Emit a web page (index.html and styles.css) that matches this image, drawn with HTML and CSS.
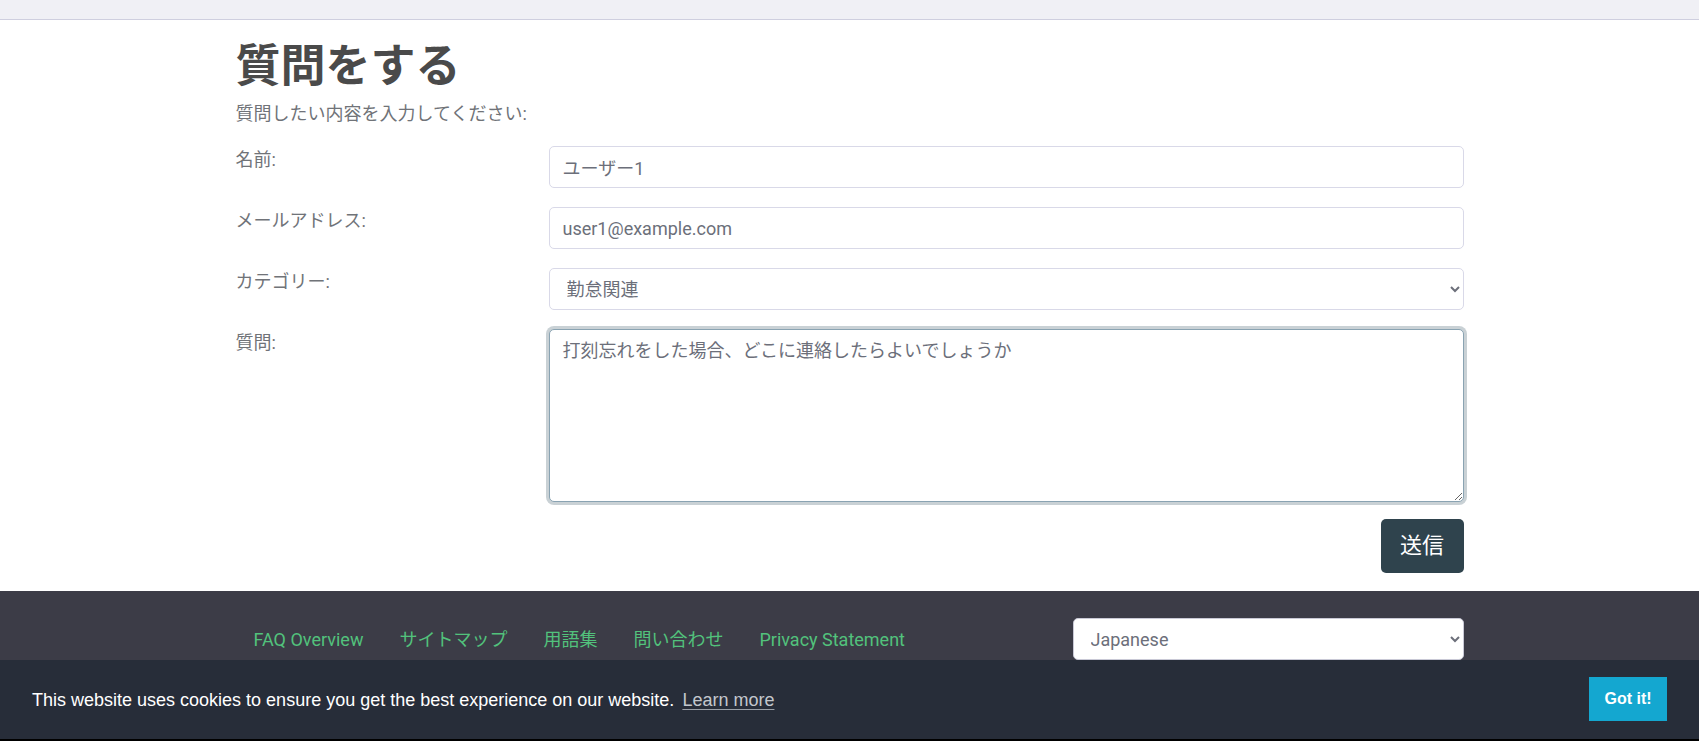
FILE: index.html
```html
<!DOCTYPE html>
<html lang="ja">
<head>
<meta charset="utf-8">
<title>質問をする</title>
<link rel="stylesheet" href="styles.css">
</head>
<body>
<div class="topbar"></div>
<main class="container">
  <h1 class="title">質問をする</h1>
  <p class="lead">質問したい内容を入力してください:</p>
  <form class="qform">
    <div class="row">
      <label class="label" for="name">名前:</label>
      <input class="field" id="name" type="text" value="ユーザー1">
    </div>
    <div class="row">
      <label class="label" for="mail">メールアドレス:</label>
      <input class="field" id="mail" type="text" value="user1@example.com">
    </div>
    <div class="row">
      <label class="label" for="cat">カテゴリー:</label>
      <select class="field select" id="cat">
        <option>勤怠関連</option>
      </select>
    </div>
    <div class="row">
      <label class="label" for="q">質問:</label>
      <textarea class="field area" id="q">打刻忘れをした場合、どこに連絡したらよいでしょうか</textarea>
    </div>
    <div class="actions">
      <button class="submit" type="button">送信</button>
    </div>
  </form>
</main>
<footer class="footer">
  <div class="container footer-row">
    <nav class="links">
      <a class="link" href="#">FAQ Overview</a>
      <a class="link" href="#">サイトマップ</a>
      <a class="link" href="#">用語集</a>
      <a class="link" href="#">問い合わせ</a>
      <a class="link" href="#">Privacy Statement</a>
    </nav>
    <select class="lang">
      <option>Japanese</option>
    </select>
  </div>
</footer>
<div class="cookie">
  <span class="cookie-msg">This website uses cookies to ensure you get the best experience on our website. <a class="learn" href="#">Learn more</a></span>
  <button class="gotit" type="button">Got it!</button>
</div>
</body>
</html>
```

FILE: styles.css
```css
* { box-sizing: border-box; }

html, body {
  margin: 0;
  padding: 0;
  background: #ffffff;
  font-family: Roboto, "Noto Sans CJK JP", sans-serif;
  font-size: 18px;
  line-height: 27px;
  color: #6c6f75;
  overflow: hidden;
}

.topbar {
  height: 20px;
  background: #f0f0f5;
  border-bottom: 1px solid #cfcfdf;
}

.container {
  width: 1228px;
  margin: 0 auto;
}

.title {
  margin: 20px 0 6px;
  font-size: 45px;
  line-height: 54px;
  font-weight: 700;
  color: #4a4a4a;
  font-family: Roboto, "Noto Sans CJK JP", sans-serif;
}

.lead {
  margin: 0 0 19px;
  font-size: 18px;
  line-height: 27px;
  color: #707378;
}

.qform {
  display: flex;
  flex-direction: column;
  gap: 19px;
}

.row {
  display: grid;
  grid-template-columns: 313px 1fr;
  align-items: start;
}

.label {
  font-size: 18px;
  line-height: 27px;
  color: #707378;
}

.field {
  display: block;
  width: 100%;
  height: 42px;
  padding: 0 13px;
  font-family: Roboto, "Noto Sans CJK JP", sans-serif;
  font-size: 18px;
  line-height: 27px;
  color: #6c6f7a;
  background: #ffffff;
  border: 1px solid #d9d9e8;
  border-radius: 5px;
  outline: none;
}

.select {
  padding: 0 10px 0 13px;
}

.area {
  height: 173px;
  padding: 7px 13px;
  resize: vertical;
  border-color: #8aa3b2;
  box-shadow: 0 0 0 3px #c9d1d5;
}

.actions {
  display: flex;
  justify-content: flex-end;
  margin-top: -2px;
}

.submit {
  width: 83px;
  height: 54px;
  padding: 0;
  border: none;
  border-radius: 5px;
  background: #2f434d;
  color: #ffffff;
  font-family: Roboto, "Noto Sans CJK JP", sans-serif;
  font-size: 22px;
  line-height: 30px;
}

.footer {
  margin-top: 18px;
  height: 151px;
  background: #3c3c47;
  padding-top: 27px;
}

.footer-row {
  display: grid;
  grid-template-columns: 1fr 391px;
  align-items: center;
}

.links {
  display: flex;
}

.link {
  padding: 0 18px;
  color: #52c27c;
  text-decoration: none;
  font-size: 18px;
  line-height: 27px;
}

.lang {
  display: block;
  width: 100%;
  height: 42px;
  padding: 0 10px 0 13px;
  font-family: Roboto, "Noto Sans CJK JP", sans-serif;
  font-size: 18px;
  color: #6c6f7a;
  background: #ffffff;
  border: 1px solid #c9c9d6;
  border-radius: 5px;
}

.cookie {
  position: fixed;
  left: 0;
  right: 0;
  bottom: 0;
  height: 81px;
  background: #272d39;
  border-bottom: 2px solid #000000;
  display: flex;
  align-items: center;
  justify-content: space-between;
  padding: 0 32px;
  font-family: "Liberation Sans", Arial, sans-serif;
  font-size: 18px;
  line-height: 26px;
  color: #ffffff;
}

.learn {
  margin-left: 3px;
  color: #c3c7cd;
  text-decoration: underline;
  text-decoration-color: #9aa0a8;
  text-underline-offset: 3px;
}

.gotit {
  height: 44px;
  width: 78px;
  padding: 0;
  margin-top: -2px;
  border: none;
  background: #14a7d0;
  color: #ffffff;
  font-family: "Liberation Sans", Arial, sans-serif;
  font-size: 16px;
  font-weight: 700;
}
```
